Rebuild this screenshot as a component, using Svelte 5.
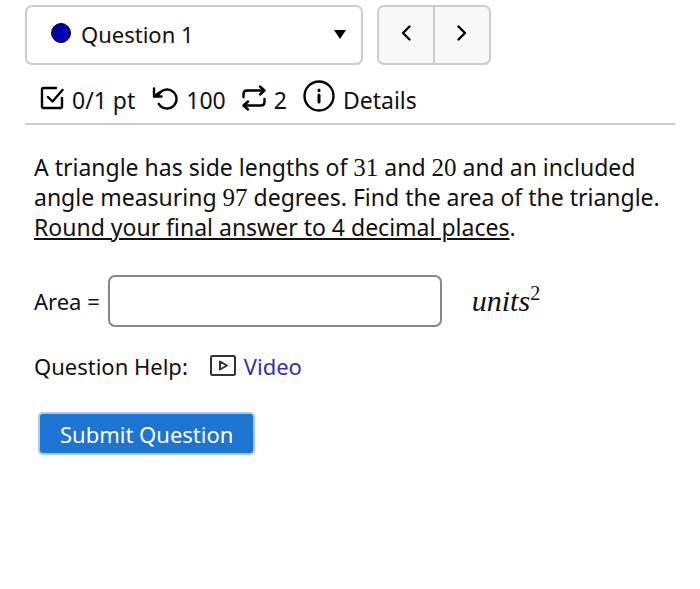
<script>
	let question = $state(1);
	let answer = $state('');
	let showDetails = $state(false);

	const questions = [1, 2, 3, 4, 5];

	function step(amount) {
		question = Math.min(questions.length, Math.max(1, question + amount));
	}

	function submit(event) {
		event.preventDefault();
	}
</script>

<main>
	<header>
		<nav>
			<div class="picker">
				<span class="dot"></span>
				<select bind:value={question} aria-label="Select question">
					{#each questions as number}
						<option value={number}>Question {number}</option>
					{/each}
				</select>
				<svg class="caret" width="12" height="9" viewBox="0 0 12 9" aria-hidden="true">
					<path d="M0 0h12L6 9z" fill="#000" />
				</svg>
			</div>
			<div class="steps">
				<button type="button" aria-label="Previous question" onclick={() => step(-1)}>
					<svg class="icon" width="10" height="16" viewBox="0 0 10 16">
						<path d="M8.500 1.500 2 8l6.500 6.500" />
					</svg>
				</button>
				<button type="button" aria-label="Next question" onclick={() => step(1)}>
					<svg class="icon" width="10" height="16" viewBox="0 0 10 16">
						<path d="M1.500 1.500 8 8l-6.500 6.500" />
					</svg>
				</button>
			</div>
		</nav>

		<div class="status">
			<span class="item">
				<svg class="icon" width="24" height="24" viewBox="0 0 24 24" aria-hidden="true">
					<path d="M16 2H3.500Q2 2 2 3.500V20.500Q2 22 3.500 22H20.500Q22 22 22 20.500V12" />
					<path d="m8 11 4.500 4.500L22.500 4" />
				</svg>
				0/1 pt
			</span>
			<span class="item">
				<svg class="icon" width="27" height="24" viewBox="0 0 27 24" aria-hidden="true">
					<path d="M3 2.500v8h7.500" />
					<path d="M7 10A9.500 9.500 0 1 1 7.800 17.800" />
					<path d="M3.500 10 8.500 6.500" />
				</svg>
				100
			</span>
			<span class="item">
				<svg class="icon" width="24" height="26" viewBox="0 0 24 26" aria-hidden="true">
					<path d="m18 1.500 4.500 4L18 9.500M1.500 12V9Q1.500 5.500 5 5.500H22" />
					<path d="m6 24.500-4.500-4 4.500-4M22.500 14v3Q22.500 20.500 19 20.500H2" />
				</svg>
				2
			</span>
			<button
				type="button"
				class="item details"
				aria-expanded={showDetails}
				onclick={() => (showDetails = !showDetails)}
			>
				<svg class="icon info" width="32" height="32" viewBox="0 0 32 32" aria-hidden="true">
					<circle cx="16" cy="16" r="14.500" />
					<path d="M16 15v7M16 10v.5" stroke-width="3" />
				</svg>
				Details
			</button>
		</div>
	</header>

	<form onsubmit={submit}>
		<p class="prompt">
			A triangle has side lengths of <span class="math">31</span> and
			<span class="math">20</span> and an included angle measuring
			<span class="math">97</span> degrees. Find the area of the triangle.
			<u>Round your final answer to 4 decimal places</u>.
		</p>

		<div class="answer">
			<label for="area">Area =</label>
			<input id="area" type="text" autocomplete="off" bind:value={answer} />
			<span class="math units"><i>units</i><sup>2</sup></span>
		</div>

		<p class="help">
			Question Help:
			<a href="#video">
				<svg width="26" height="21" viewBox="0 0 26 21" aria-hidden="true">
					<rect x="1" y="1" width="24" height="19" rx="1.500" />
					<path d="M10 6.500v8l7-4z" />
				</svg>
				Video
			</a>
		</p>

		<button type="submit" class="submit">Submit Question</button>
	</form>
</main>

<style>
	:global(body) {
		margin: 0;
		background: #fff;
	}

	main {
		padding: 5px 25px 24px;
		color: #111;
		font: 22px/30px 'Trebuchet MS', 'Noto Sans', sans-serif;
	}

	select,
	button,
	input {
		box-sizing: border-box;
		margin: 0;
		color: inherit;
		font: inherit;
	}

	header {
		border-bottom: 2px solid #ccc;
	}

	nav {
		display: flex;
		gap: 14px;
	}

	.picker {
		position: relative;
		flex: 0 1 338px;
		min-width: 0;
	}

	select {
		width: 100%;
		height: 60px;
		padding: 0 40px 2px 54px;
		border: 2px solid #ccc;
		border-radius: 7px;
		background: #fff;
		appearance: none;
	}

	.dot {
		position: absolute;
		top: 18px;
		left: 26px;
		box-sizing: border-box;
		width: 20px;
		height: 20px;
		border: 1px solid #000;
		border-radius: 50%;
		background: #0000b0;
		pointer-events: none;
	}

	.caret {
		position: absolute;
		top: 25px;
		right: 17px;
		pointer-events: none;
	}

	.steps {
		display: flex;
	}

	.steps button {
		display: flex;
		align-items: center;
		justify-content: center;
		width: 58px;
		height: 60px;
		padding: 0 0 4px;
		border: 2px solid #ccc;
		background: #f8f8f8;
	}

	.steps button:first-child {
		border-radius: 7px 0 0 7px;
	}

	.steps button:last-child {
		margin-left: -2px;
		border-radius: 0 7px 7px 0;
	}

	.icon {
		flex: none;
		fill: none;
		stroke: #000;
		stroke-width: 2.4;
		stroke-linecap: round;
		stroke-linejoin: round;
	}

	.status {
		display: flex;
		flex-wrap: wrap;
		gap: 16px;
		padding: 16px 15px 4px;
		font-size: 23px;
	}

	.item {
		display: flex;
		align-items: center;
		gap: 8px;
		height: 38px;
	}

	.item .icon {
		margin-bottom: 4px;
	}

	.item .info {
		margin-bottom: 8px;
	}

	.details {
		padding: 0;
		border: 0;
		background: none;
	}

	form {
		padding: 27px 0 0 9px;
	}

	.prompt {
		margin: 0;
		font-size: 23px;
	}

	.math {
		font-family: 'Liberation Serif', serif;
		font-size: 25px;
		line-height: 1;
	}

	u {
		text-decoration-thickness: 2px;
		text-underline-offset: 2px;
	}

	.answer {
		display: flex;
		align-items: center;
		gap: 8px;
		margin-top: 33px;
	}

	.answer input {
		flex: 0 1 334px;
		min-width: 0;
		height: 52px;
		padding: 0 10px;
		border: 2px solid #888;
		border-radius: 7px;
		background: #fff;
	}

	.units {
		margin-left: 22px;
		font-size: 30px;
	}

	sup {
		font-size: 20px;
		line-height: 0;
	}

	.help {
		display: flex;
		gap: 22px;
		margin: 24px 0 0;
	}

	a {
		display: flex;
		align-items: center;
		gap: 8px;
		color: #3a2fa8;
		text-decoration: none;
	}

	a svg {
		margin-bottom: 2px;
		fill: none;
		stroke: #333;
		stroke-width: 2;
		stroke-linejoin: round;
	}

	.submit {
		height: 43px;
		margin: 31px 0 0 4px;
		padding: 0 20px;
		border: 2px solid #a9c8ec;
		border-radius: 5px;
		background: #1e74d2;
		color: #fff;
	}
</style>
